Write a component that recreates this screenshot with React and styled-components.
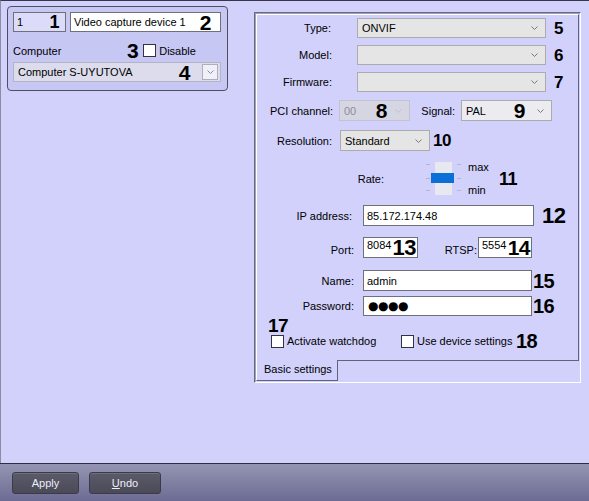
import React from "react";
import styled, { createGlobalStyle } from "styled-components";

const Global = createGlobalStyle`
  html, body { margin: 0; padding: 0; overflow: hidden; }
  body { font-family: "Liberation Sans", Arial, sans-serif; }
  #root { width: 589px; height: 501px; }
  * { box-sizing: border-box; }
`;

const Window = styled.div`
  width: 589px;
  height: 501px;
  display: flex;
  flex-direction: column;
  font-family: "Liberation Sans", Arial, sans-serif;
  font-size: 11px;
  color: #000;
`;

const Main = styled.div`
  height: 463px;
  flex: none;
  display: flex;
  align-items: flex-start;
  background: #d1d1fb;
  border-top: 1px solid #363648;
  border-left: 1px solid #8c8ca4;
`;

const DeviceGroup = styled.div`
  width: 221px;
  height: 85px;
  margin: 5px 0 0 6px;
  padding: 5px 0 0 5px;
  border: 1px solid #4e4e60;
  border-radius: 4px;
  background: #c7c7f3;
  display: flex;
  flex-direction: column;
`;

const GroupRow = styled.div`
  display: flex;
  align-items: center;
  height: ${(p) => p.$h}px;
  margin-top: ${(p) => p.$mt || 0}px;
`;

const Field = styled.div`
  display: flex;
  align-items: center;
  width: ${(p) => p.$w}px;
  height: ${(p) => p.$h || 20}px;
  margin-left: ${(p) => p.$ml || 0}px;
  padding: 0 ${(p) => p.$pr || 3}px 0 3px;
  background: ${(p) => p.$bg || "#fff"};
  border: 1px solid #707078;
`;

const FieldText = styled.span`
  flex: 1;
  white-space: nowrap;
  align-self: ${(p) => (p.$top ? "flex-start" : "center")};
  padding-top: ${(p) => (p.$top ? 1 : 0)}px;
`;

const Num = styled.span`
  font-family: "Liberation Sans", Arial, sans-serif;
  font-weight: bold;
  font-size: ${(p) => p.$size || 18}px;
  line-height: 1;
  color: #000;
  margin-left: ${(p) => p.$ml || 0}px;
  flex: none;
  letter-spacing: -0.5px;
`;

const Text = styled.span`
  white-space: nowrap;
  margin-left: ${(p) => p.$ml || 0}px;
  width: ${(p) => (p.$w ? `${p.$w}px` : "auto")};
  flex: none;
`;

const Label = styled.span`
  width: ${(p) => p.$w}px;
  flex: none;
  text-align: right;
  white-space: nowrap;
  margin-left: ${(p) => p.$ml || 0}px;
  align-self: ${(p) => (p.$low ? "flex-end" : "center")};
  padding-bottom: ${(p) => (p.$low ? 2 : 0)}px;
`;

const CheckBox = styled.span`
  width: 13px;
  height: 13px;
  flex: none;
  background: #fff;
  border: 1px solid #333340;
  margin-left: ${(p) => p.$ml || 0}px;
`;

const ComputerCombo = styled.div`
  display: flex;
  align-items: center;
  width: 208px;
  height: 20px;
  margin-top: 5px;
  padding: 0 2px 0 4px;
  background: #dcdcec;
  border: 1px solid #b4b4c6;
`;

const DropButton = styled.span`
  width: 16px;
  height: 16px;
  margin-left: 12px;
  flex: none;
  display: flex;
  align-items: center;
  justify-content: center;
  background: #f0f0f8;
  border: 1px solid #aeaec0;
`;

const SettingsFrame = styled.div`
  width: 327px;
  height: 371px;
  margin: 11px 0 0 26px;
  padding: 1px 1px 0 1px;
  border-style: solid;
  border-width: 1px;
  border-color: #686880 #ffffff #ffffff #686880;
  box-shadow: inset 1px 1px 0 #a2a2b6;
  display: flex;
  flex-direction: column;
`;

const TabPage = styled.div`
  height: 346px;
  flex: none;
  border-style: solid;
  border-width: 1px 1px 0 1px;
  border-color: #ffffff #62627a #ffffff #ffffff;
  display: flex;
  flex-direction: column;
`;

const FormRow = styled.div`
  display: flex;
  align-items: center;
  height: ${(p) => p.$h}px;
  margin-top: ${(p) => p.$mt}px;
  flex: none;
`;

const Combo = styled.div`
  display: flex;
  align-items: center;
  width: ${(p) => p.$w}px;
  height: ${(p) => p.$h || 20}px;
  margin-left: ${(p) => p.$ml || 0}px;
  padding: 0 7px 0 4px;
  background: ${(p) => (p.$disabled ? "#d6d6e2" : p.$bg || "#e5e5e5")};
  border: 1px solid ${(p) => (p.$disabled ? "#c2c2d0" : "#acacac")};
  color: ${(p) => (p.$disabled ? "#8c8c98" : "#000")};
  flex: none;
`;

const ChevronWrap = styled.span`
  display: flex;
  margin-left: ${(p) => (p.$ml == null ? "auto" : `${p.$ml}px`)};
  flex: none;
`;

const SliderBox = styled.div`
  width: 35px;
  height: 35px;
  margin-left: ${(p) => p.$ml}px;
  flex: none;
  display: flex;
`;

const RangeLabels = styled.div`
  width: 24px;
  height: 35px;
  margin-left: 7px;
  display: flex;
  flex-direction: column;
  justify-content: space-between;
  line-height: 12px;
`;

const Dots = styled.span`
  flex: 1;
  font-family: "DejaVu Sans", sans-serif;
  font-size: 12px;
  letter-spacing: -0.5px;
  padding-left: 1px;
`;

const TabStrip = styled.div`
  display: flex;
  height: 22px;
  flex: none;
`;

const Tab = styled.div`
  width: 82px;
  height: 21px;
  flex: none;
  padding: 3px 0 0 7px;
  border-style: solid;
  border-width: 0 1px 1px 1px;
  border-color: #62627a #62627a #62627a #ffffff;
  white-space: nowrap;
`;

const TabFiller = styled.div`
  flex: 1;
  border-top: 1px solid #62627a;
`;

const Footer = styled.div`
  flex: 1;
  display: flex;
  align-items: flex-start;
  gap: 10px;
  padding: 8px 0 0 12px;
  border-top: 1px solid #2e2e40;
  background: linear-gradient(#9494b2, #6c6c94);
`;

const Button = styled.div`
  width: ${(p) => p.$w}px;
  height: 22px;
  display: flex;
  align-items: center;
  justify-content: center;
  color: #eeeef4;
  background: linear-gradient(#5a5a6a, #4a4a58);
  border: 1px solid #3a3a48;
  border-radius: 3px;
  box-shadow: inset 0 1px 0 #6e6e80;
`;

const Chevron = ({ color = "#7a7a7a", ml }) => (
  <ChevronWrap $ml={ml}>
    <svg width="7" height="4" viewBox="0 0 7 4">
      <path d="M0.5 0.5 L3.5 3.5 L6.5 0.5" fill="none" stroke={color} strokeWidth="1" />
    </svg>
  </ChevronWrap>
);

const Slider = () => (
  <SliderBox $ml={42}>
    <svg width="35" height="35" viewBox="0 0 35 35">
      <rect x="9" y="1" width="17" height="33" fill="#e8e8f0" />
      <g stroke="#b6b6c8" strokeWidth="1">
        <line x1="0" y1="3.5" x2="4" y2="3.5" />
        <line x1="0" y1="17.5" x2="4" y2="17.5" />
        <line x1="0" y1="29.5" x2="4" y2="29.5" />
        <line x1="31" y1="3.5" x2="35" y2="3.5" />
        <line x1="31" y1="17.5" x2="35" y2="17.5" />
        <line x1="31" y1="29.5" x2="35" y2="29.5" />
      </g>
      <rect x="5" y="12" width="23" height="10" fill="#0a6fd6" />
    </svg>
  </SliderBox>
);

export default function App() {
  return (
    <>
      <Global />
      <Window>
        <Main>
          <DeviceGroup>
            <GroupRow $h={20}>
              <Field $w={53} $bg="#dcdcfa" $pr={6}>
                <FieldText>1</FieldText>
                <Num $size={18}>1</Num>
              </Field>
              <Field $w={151} $ml={4} $pr={9}>
                <FieldText>Video capture device 1</FieldText>
                <Num $size={21}>2</Num>
              </Field>
            </GroupRow>
            <GroupRow $h={13} $mt={12}>
              <Text $w={114}>Computer</Text>
              <Num $size={21}>3</Num>
              <CheckBox $ml={5} />
              <Text $ml={3}>Disable</Text>
            </GroupRow>
            <ComputerCombo>
              <FieldText>Computer S-UYUTOVA</FieldText>
              <Num $size={21}>4</Num>
              <DropButton>
                <svg width="7" height="4" viewBox="0 0 7 4">
                  <path d="M0.5 0.5 L3.5 3.5 L6.5 0.5" fill="none" stroke="#8a8a9a" strokeWidth="1" />
                </svg>
              </DropButton>
            </ComputerCombo>
          </DeviceGroup>

          <SettingsFrame>
            <TabPage>
              <FormRow $mt={3} $h={20}>
                <Label $w={74}>Type:</Label>
                <Combo $w={189} $ml={26}>
                  <FieldText>ONVIF</FieldText>
                  <Chevron />
                </Combo>
                <Num $size={17} $ml={8}>5</Num>
              </FormRow>
              <FormRow $mt={7} $h={20}>
                <Label $w={75}>Model:</Label>
                <Combo $w={189} $ml={25}>
                  <Chevron />
                </Combo>
                <Num $size={17} $ml={8}>6</Num>
              </FormRow>
              <FormRow $mt={7} $h={20}>
                <Label $w={75}>Firmware:</Label>
                <Combo $w={189} $ml={25}>
                  <Chevron />
                </Combo>
                <Num $size={17} $ml={8}>7</Num>
              </FormRow>
              <FormRow $mt={8} $h={21}>
                <Label $w={76}>PCI channel:</Label>
                <Combo $w={71} $h={21} $ml={6} $disabled>
                  <FieldText>00</FieldText>
                  <Num $size={21}>8</Num>
                  <Chevron color="#c0c0cc" ml={8} />
                </Combo>
                <Label $w={45}>Signal:</Label>
                <Combo $w={91} $h={21} $ml={6} $bg="#ececf0">
                  <FieldText>PAL</FieldText>
                  <Num $size={21}>9</Num>
                  <Chevron ml={12} />
                </Combo>
              </FormRow>
              <FormRow $mt={9} $h={21}>
                <Label $w={75}>Resolution:</Label>
                <Combo $w={90} $h={21} $ml={8}>
                  <FieldText>Standard</FieldText>
                  <Chevron />
                </Combo>
                <Num $size={17} $ml={3}>10</Num>
              </FormRow>
              <FormRow $mt={10} $h={35}>
                <Label $w={127}>Rate:</Label>
                <Slider />
                <RangeLabels>
                  <span>max</span>
                  <span>min</span>
                </RangeLabels>
                <Num $size={18} $ml={7}>11</Num>
              </FormRow>
              <FormRow $mt={9} $h={21}>
                <Label $w={95}>IP address:</Label>
                <Field $w={171} $h={21} $ml={11}>
                  <FieldText>85.172.174.48</FieldText>
                </Field>
                <Num $size={22} $ml={8}>12</Num>
              </FormRow>
              <FormRow $mt={11} $h={21}>
                <Label $w={97} $low>Port:</Label>
                <Field $w={55} $h={21} $ml={9} $pr={1}>
                  <FieldText $top>8084</FieldText>
                  <Num $size={22}>13</Num>
                </Field>
                <Label $w={59} $low>RTSP:</Label>
                <Field $w={54} $h={21} $ml={1} $pr={1}>
                  <FieldText $top>5554</FieldText>
                  <Num $size={21}>14</Num>
                </Field>
              </FormRow>
              <FormRow $mt={12} $h={21}>
                <Label $w={97}>Name:</Label>
                <Field $w={169} $h={21} $ml={9}>
                  <FieldText>admin</FieldText>
                </Field>
                <Num $size={20} $ml={1}>15</Num>
              </FormRow>
              <FormRow $mt={5} $h={20}>
                <Label $w={97}>Password:</Label>
                <Field $w={169} $h={20} $ml={9}>
                  <Dots>●●●●</Dots>
                </Field>
                <Num $size={20} $ml={1}>16</Num>
              </FormRow>
              <FormRow $mt={2} $h={15}>
                <Num $size={19} $ml={11}>17</Num>
              </FormRow>
              <FormRow $mt={1} $h={14}>
                <CheckBox $ml={14} />
                <Text $ml={3} $w={114}>Activate watchdog</Text>
                <CheckBox />
                <Text $ml={3} $w={99}>Use device settings</Text>
                <Num $size={20}>18</Num>
              </FormRow>
            </TabPage>
            <TabStrip>
              <Tab>Basic settings</Tab>
              <TabFiller />
            </TabStrip>
          </SettingsFrame>
        </Main>
        <Footer>
          <Button $w={67}>Apply</Button>
          <Button $w={72}>
            <span>
              <u>U</u>ndo
            </span>
          </Button>
        </Footer>
      </Window>
    </>
  );
}
